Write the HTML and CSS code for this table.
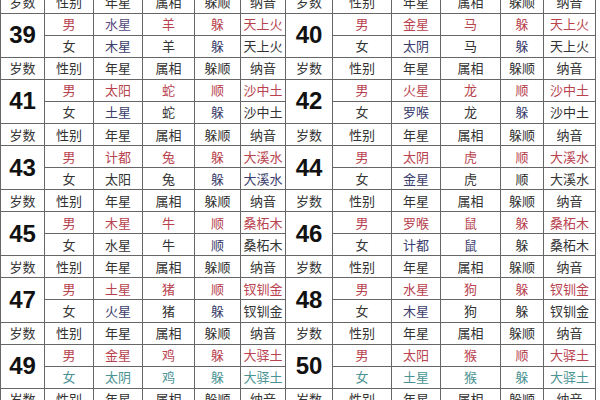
FILE: index.html
```html
<!DOCTYPE html>
<html lang="zh">
<head>
<meta charset="utf-8">
<link rel="stylesheet" href="styles.css">
</head>
<body>
<div class="page">
<table class="grid">
<colgroup>
<col class="c44"><col class="c49"><col class="c49"><col class="c52"><col class="c46"><col class="c45">
<col class="c47"><col class="c59"><col class="c49"><col class="c60"><col class="c43"><col class="c52">
</colgroup>
<tbody>
<tr class="hd"><td>岁数</td><td>性别</td><td>年星</td><td>属相</td><td>躲顺</td><td>纳音</td><td>岁数</td><td>性别</td><td>年星</td><td>属相</td><td>躲顺</td><td>纳音</td></tr>

<tr><td rowspan="2" class="age">39</td><td class="m">男</td><td class="p">水星</td><td class="m">羊</td><td class="m">躲</td><td class="m">天上火</td>
<td rowspan="2" class="age">40</td><td class="m">男</td><td class="m">金星</td><td class="m">马</td><td class="m">躲</td><td class="m">天上火</td></tr>
<tr><td class="f">女</td><td class="n">木星</td><td class="f">羊</td><td class="n">躲</td><td class="f">天上火</td>
<td class="f">女</td><td class="n">太阴</td><td class="f">马</td><td class="n">躲</td><td class="f">天上火</td></tr>
<tr class="hd"><td>岁数</td><td>性别</td><td>年星</td><td>属相</td><td>躲顺</td><td>纳音</td><td>岁数</td><td>性别</td><td>年星</td><td>属相</td><td>躲顺</td><td>纳音</td></tr>

<tr><td rowspan="2" class="age">41</td><td class="m">男</td><td class="m">太阳</td><td class="m">蛇</td><td class="m">顺</td><td class="m">沙中土</td>
<td rowspan="2" class="age">42</td><td class="m">男</td><td class="m">火星</td><td class="m">龙</td><td class="m">顺</td><td class="m">沙中土</td></tr>
<tr><td class="f">女</td><td class="n">土星</td><td class="f">蛇</td><td class="n">躲</td><td class="f">沙中土</td>
<td class="f">女</td><td class="n">罗喉</td><td class="f">龙</td><td class="n">躲</td><td class="f">沙中土</td></tr>
<tr class="hd"><td>岁数</td><td>性别</td><td>年星</td><td>属相</td><td>躲顺</td><td>纳音</td><td>岁数</td><td>性别</td><td>年星</td><td>属相</td><td>躲顺</td><td>纳音</td></tr>

<tr><td rowspan="2" class="age">43</td><td class="m">男</td><td class="m">计都</td><td class="m">兔</td><td class="m">躲</td><td class="m">大溪水</td>
<td rowspan="2" class="age">44</td><td class="m">男</td><td class="m">太阴</td><td class="m">虎</td><td class="m">顺</td><td class="m">大溪水</td></tr>
<tr><td class="f">女</td><td class="f">太阳</td><td class="f">兔</td><td class="n">躲</td><td class="n">大溪水</td>
<td class="f">女</td><td class="n">金星</td><td class="f">虎</td><td class="f">顺</td><td class="f">大溪水</td></tr>
<tr class="hd"><td>岁数</td><td>性别</td><td>年星</td><td>属相</td><td>躲顺</td><td>纳音</td><td>岁数</td><td>性别</td><td>年星</td><td>属相</td><td>躲顺</td><td>纳音</td></tr>

<tr><td rowspan="2" class="age">45</td><td class="m">男</td><td class="m">木星</td><td class="m">牛</td><td class="m">顺</td><td class="m">桑柘木</td>
<td rowspan="2" class="age">46</td><td class="m">男</td><td class="m">罗喉</td><td class="m">鼠</td><td class="m">躲</td><td class="m">桑柘木</td></tr>
<tr><td class="f">女</td><td class="f">水星</td><td class="f">牛</td><td class="n">顺</td><td class="f">桑柘木</td>
<td class="f">女</td><td class="n">计都</td><td class="n">鼠</td><td class="f">躲</td><td class="f">桑柘木</td></tr>
<tr class="hd"><td>岁数</td><td>性别</td><td>年星</td><td>属相</td><td>躲顺</td><td>纳音</td><td>岁数</td><td>性别</td><td>年星</td><td>属相</td><td>躲顺</td><td>纳音</td></tr>

<tr><td rowspan="2" class="age">47</td><td class="m">男</td><td class="m">土星</td><td class="m">猪</td><td class="m">顺</td><td class="m">钗钏金</td>
<td rowspan="2" class="age">48</td><td class="m">男</td><td class="m">水星</td><td class="m">狗</td><td class="m">躲</td><td class="m">钗钏金</td></tr>
<tr><td class="f">女</td><td class="n">火星</td><td class="f">猪</td><td class="n">躲</td><td class="f">钗钏金</td>
<td class="f">女</td><td class="n">木星</td><td class="f">狗</td><td class="f">躲</td><td class="f">钗钏金</td></tr>
<tr class="hd"><td>岁数</td><td>性别</td><td>年星</td><td>属相</td><td>躲顺</td><td>纳音</td><td>岁数</td><td>性别</td><td>年星</td><td>属相</td><td>躲顺</td><td>纳音</td></tr>

<tr><td rowspan="2" class="age">49</td><td class="m">男</td><td class="m">金星</td><td class="m">鸡</td><td class="m">躲</td><td class="m">大驿土</td>
<td rowspan="2" class="age">50</td><td class="m">男</td><td class="m">太阳</td><td class="m">猴</td><td class="m">顺</td><td class="m">大驿土</td></tr>
<tr><td class="t">女</td><td class="t">太阴</td><td class="t">鸡</td><td class="t">躲</td><td class="t">大驿土</td>
<td class="t">女</td><td class="t">土星</td><td class="t">猴</td><td class="t">躲</td><td class="t">大驿土</td></tr>
<tr class="hd"><td>岁数</td><td>性别</td><td>年星</td><td>属相</td><td>躲顺</td><td>纳音</td><td>岁数</td><td>性别</td><td>年星</td><td>属相</td><td>躲顺</td><td>纳音</td></tr>
</tbody>
</table>
</div>
</body>
</html>
```

FILE: styles.css
```css
html, body {
  margin: 0;
  padding: 0;
  background: #ffffff;
}
body {
  width: 600px;
  height: 400px;
  overflow: hidden;
  font-family: "Noto Sans CJK SC", "Liberation Sans", sans-serif;
  font-size: 13px;
  color: #333;
}
.page {
  margin-top: -9.4px;
}
.grid {
  border-collapse: collapse;
  table-layout: fixed;
  width: 595px;
}
.c43 { width: 43px; }
.c44 { width: 44px; }
.c45 { width: 45px; }
.c46 { width: 46px; }
.c47 { width: 47px; }
.c49 { width: 49px; }
.c52 { width: 52px; }
.c59 { width: 59px; }
.c60 { width: 60px; }
.grid tr {
  height: 22.07px;
}
.grid td {
  border: 1px solid #666;
  padding: 0;
  text-align: center;
  vertical-align: middle;
  line-height: 14px;
  white-space: nowrap;
  overflow: hidden;
}
.hd td {
  color: #333;
}
.age {
  font-family: "Liberation Sans", Arial, sans-serif;
  font-weight: bold;
  font-size: 24px;
  color: #111;
}
.m { color: #b8434f; }
.p { color: #56487e; }
.f { color: #333; }
.n { color: #3b3d6c; }
.t { color: #4b9393; }
```
